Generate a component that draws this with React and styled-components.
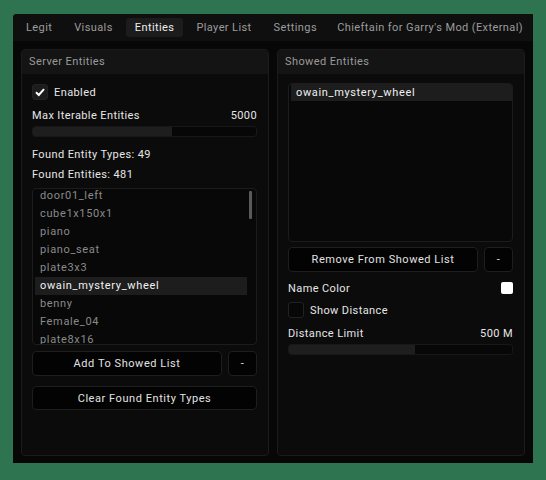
import React from "react";
import styled, { createGlobalStyle } from "styled-components";

const Global = createGlobalStyle`
  html, body { margin: 0; padding: 0; background: #2e7450; }
  body { font-family: Roboto, "Liberation Sans", sans-serif; font-size: 11px; }
  * { box-sizing: border-box; }
`;

const Page = styled.div`
  width: 546px;
  height: 480px;
  padding: 14px 13px 17px 13px;
  display: flex;
`;

const Window = styled.div`
  flex: 1;
  display: flex;
  flex-direction: column;
  background: #070707;
  border-radius: 4px 0 0 0;
  overflow: hidden;
`;

const TabBar = styled.div`
  height: 27px;
  background: #0f0f0f;
  display: flex;
  align-items: center;
  gap: 4px;
  padding: 0 10px 0 4px;
`;

const Tab = styled.div`
  height: 19px;
  line-height: 19px;
  padding: 0 9px;
  border-radius: 3px;
  color: ${(p) => (p.$active ? "#ececec" : "#9c9c9c")};
  background: ${(p) => (p.$active ? "#1c1c1c" : "transparent")};
  letter-spacing: 0.4px;
`;

const Title = styled.div`
  margin-left: auto;
  color: #9c9c9c;
  letter-spacing: 0.4px;
`;

const Content = styled.div`
  flex: 1;
  display: flex;
  gap: 8px;
  padding: 8px 8px 7px 8px;
`;

const Panel = styled.div`
  flex: 1;
  display: flex;
  flex-direction: column;
  background: #0b0b0b;
  border: 1px solid #1b1b1b;
  border-radius: 4px;
  overflow: hidden;
`;

const PanelHeader = styled.div`
  height: 24px;
  line-height: 24px;
  background: #141414;
  color: #9a9a9a;
  padding-left: 7px;
  letter-spacing: 0.4px;
`;

const PanelBody = styled.div`
  display: flex;
  flex-direction: column;
  padding: ${(p) => p.$top}px 11px 0 10px;
`;

const Row = styled.div`
  display: flex;
  align-items: center;
  justify-content: space-between;
  height: ${(p) => p.$h || 14}px;
  margin-top: ${(p) => p.$mt || 0}px;
  color: #e6e6e6;
  letter-spacing: 0.4px;
`;

const CheckRow = styled.div`
  display: flex;
  align-items: center;
  gap: 6px;
  height: 16px;
  margin-top: ${(p) => p.$mt || 0}px;
  color: #e6e6e6;
  letter-spacing: 0.4px;
`;

const Box = styled.div`
  width: 16px;
  height: 16px;
  border-radius: 3px;
  background: ${(p) => (p.$checked ? "#1c1c1c" : "#070707")};
  border: 1px solid #222;
  display: flex;
  align-items: center;
  justify-content: center;
`;

const Slider = styled.div`
  height: 11px;
  margin-top: ${(p) => p.$mt || 4}px;
  background: #070707;
  border: 1px solid #181818;
  border-radius: 3px;
  overflow: hidden;
  display: flex;
`;

const SliderFill = styled.div`
  height: 100%;
  background: #1e1e1e;
`;

const ListBox = styled.div`
  position: relative;
  height: ${(p) => p.$h}px;
  margin-top: ${(p) => p.$mt}px;
  background: #080808;
  border: 1px solid #1c1c1c;
  border-radius: 4px;
  overflow: hidden;
  padding: 0 ${(p) => p.$pr}px 0 2px;
`;

const ListScroll = styled.div`
  margin-top: ${(p) => p.$offset || 0}px;
`;

const ListItem = styled.div`
  height: ${(p) => p.$h || 18}px;
  line-height: ${(p) => p.$h || 18}px;
  padding-left: 5px;
  color: ${(p) => (p.$sel ? "#f0f0f0" : "#8a8a8a")};
  background: ${(p) => (p.$sel ? "#1d1d1d" : "transparent")};
  letter-spacing: 0.65px;
`;

const ScrollThumb = styled.div`
  position: absolute;
  right: 4px;
  top: 2px;
  width: 3px;
  height: 28px;
  background: #5a5a5a;
  border-radius: 1px;
`;

const ButtonRow = styled.div`
  display: flex;
  gap: 6px;
  margin-top: ${(p) => p.$mt}px;
`;

const Button = styled.div`
  flex: ${(p) => (p.$small ? "0 0 29px" : "1")};
  height: ${(p) => p.$h || 25}px;
  display: flex;
  align-items: center;
  justify-content: center;
  background: #030303;
  border: 1px solid #1e1e1e;
  border-radius: 4px;
  color: #e2e2e2;
  letter-spacing: 0.55px;
`;

const Swatch = styled.div`
  width: 12px;
  height: 12px;
  background: #ffffff;
  border-radius: 2px;
`;

const Check = () => (
  <svg width="12" height="12" viewBox="0 0 12 12">
    <path d="M2 6.3 L4.8 9 L10 3.2" fill="none" stroke="#ffffff" strokeWidth="2" />
  </svg>
);

const entities = [
  "door01_left",
  "cube1x150x1",
  "piano",
  "piano_seat",
  "plate3x3",
  "owain_mystery_wheel",
  "benny",
  "Female_04",
  "plate8x16",
];

export default function App() {
  return (
    <>
      <Global />
      <Page>
        <Window>
          <TabBar>
            <Tab>Legit</Tab>
            <Tab>Visuals</Tab>
            <Tab $active>Entities</Tab>
            <Tab>Player List</Tab>
            <Tab>Settings</Tab>
            <Title>Chieftain for Garry's Mod (External)</Title>
          </TabBar>
          <Content>
            <Panel>
              <PanelHeader>Server Entities</PanelHeader>
              <PanelBody $top={10}>
                <CheckRow>
                  <Box $checked>
                    <Check />
                  </Box>
                  Enabled
                </CheckRow>
                <Row $mt={8}>
                  <span>Max Iterable Entities</span>
                  <span>5000</span>
                </Row>
                <Slider>
                  <SliderFill style={{ width: "62.5%" }} />
                </Slider>
                <Row $mt={10}>Found Entity Types: 49</Row>
                <Row $mt={6}>Found Entities: 481</Row>
                <ListBox $h={157} $mt={7} $pr={9}>
                  <ListScroll $offset={-2}>
                    {entities.map((e) => (
                      <ListItem key={e} $sel={e === "owain_mystery_wheel"}>
                        {e}
                      </ListItem>
                    ))}
                  </ListScroll>
                  <ScrollThumb />
                </ListBox>
                <ButtonRow $mt={6}>
                  <Button>Add To Showed List</Button>
                  <Button $small>-</Button>
                </ButtonRow>
                <ButtonRow $mt={10}>
                  <Button $h={24}>Clear Found Entity Types</Button>
                </ButtonRow>
              </PanelBody>
            </Panel>
            <Panel>
              <PanelHeader>Showed Entities</PanelHeader>
              <PanelBody $top={9}>
                <ListBox $h={159} $mt={0} $pr={0}>
                  <ListItem $sel $h={17}>
                    owain_mystery_wheel
                  </ListItem>
                </ListBox>
                <ButtonRow $mt={5}>
                  <Button>Remove From Showed List</Button>
                  <Button $small>-</Button>
                </ButtonRow>
                <Row $mt={9}>
                  <span>Name Color</span>
                  <Swatch />
                </Row>
                <CheckRow $mt={7}>
                  <Box />
                  Show Distance
                </CheckRow>
                <Row $mt={8}>
                  <span>Distance Limit</span>
                  <span>500 M</span>
                </Row>
                <Slider>
                  <SliderFill style={{ width: "56.5%" }} />
                </Slider>
              </PanelBody>
            </Panel>
          </Content>
        </Window>
      </Page>
    </>
  );
}
